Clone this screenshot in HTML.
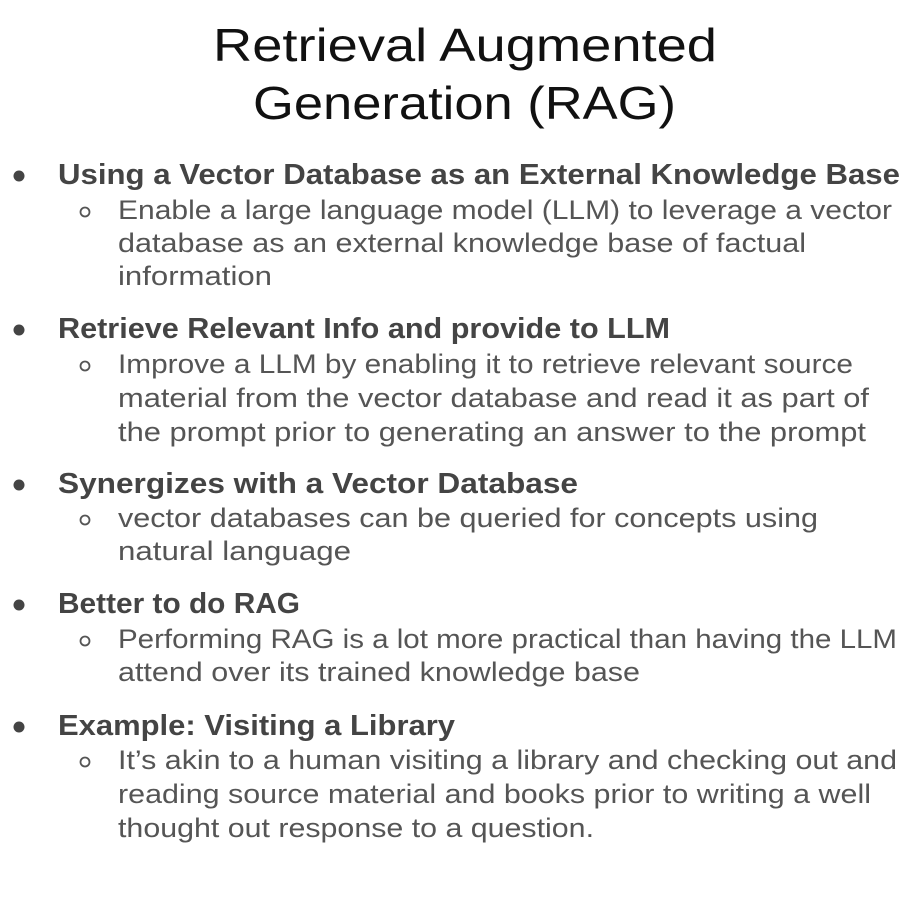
<!DOCTYPE html>
<html><head><meta charset="utf-8"><style>
html,body{margin:0;padding:0;background:#fff;}
svg{display:block;}
.t{font-family:"Liberation Sans",sans-serif;font-size:46px;fill:#111;}
.h{font-family:"Liberation Sans",sans-serif;font-size:29px;font-weight:bold;fill:#444;}
.b{font-family:"Liberation Sans",sans-serif;font-size:27px;fill:#555;}
</style></head><body>
<svg width="923" height="910" viewBox="0 0 923 910" xmlns="http://www.w3.org/2000/svg">
<text class="t" x="213" y="61" textLength="504" lengthAdjust="spacingAndGlyphs">Retrieval Augmented</text>
<text class="t" x="253" y="119" textLength="423" lengthAdjust="spacingAndGlyphs">Generation (RAG)</text>

<g fill="#444">
<circle cx="19" cy="176" r="5.5"/><circle cx="19" cy="330" r="5.5"/><circle cx="19" cy="485" r="5.5"/><circle cx="19" cy="605" r="5.5"/><circle cx="19" cy="727" r="5.5"/>
</g>
<g fill="none" stroke="#555" stroke-width="1.8">
<circle cx="85" cy="212" r="4.5"/><circle cx="85" cy="366" r="4.5"/><circle cx="85" cy="520" r="4.5"/><circle cx="85" cy="641" r="4.5"/><circle cx="85" cy="762" r="4.5"/>
</g>

<text class="h" x="58" y="184" textLength="842" lengthAdjust="spacingAndGlyphs">Using a Vector Database as an External Knowledge Base</text>
<text class="b" x="118" y="219" textLength="774" lengthAdjust="spacingAndGlyphs">Enable a large language model (LLM) to leverage a vector</text>
<text class="b" x="118" y="252" textLength="688" lengthAdjust="spacingAndGlyphs">database as an external knowledge base of factual</text>
<text class="b" x="118" y="285" textLength="154" lengthAdjust="spacingAndGlyphs">information</text>

<text class="h" x="58" y="338" textLength="612" lengthAdjust="spacingAndGlyphs">Retrieve Relevant Info and provide to LLM</text>
<text class="b" x="118" y="373" textLength="735" lengthAdjust="spacingAndGlyphs">Improve a LLM by enabling it to retrieve relevant source</text>
<text class="b" x="118" y="407" textLength="751" lengthAdjust="spacingAndGlyphs">material from the vector database and read it as part of</text>
<text class="b" x="118" y="441" textLength="748" lengthAdjust="spacingAndGlyphs">the prompt prior to generating an answer to the prompt</text>

<text class="h" x="58" y="493" textLength="520" lengthAdjust="spacingAndGlyphs">Synergizes with a Vector Database</text>
<text class="b" x="118" y="527" textLength="700" lengthAdjust="spacingAndGlyphs">vector databases can be queried for concepts using</text>
<text class="b" x="118" y="560" textLength="233" lengthAdjust="spacingAndGlyphs">natural language</text>

<text class="h" x="58" y="613" textLength="242" lengthAdjust="spacingAndGlyphs">Better to do RAG</text>
<text class="b" x="118" y="648" textLength="779" lengthAdjust="spacingAndGlyphs">Performing RAG is a lot more practical than having the LLM</text>
<text class="b" x="118" y="681" textLength="522" lengthAdjust="spacingAndGlyphs">attend over its trained knowledge base</text>

<text class="h" x="58" y="735" textLength="397" lengthAdjust="spacingAndGlyphs">Example: Visiting a Library</text>
<text class="b" x="118" y="769" textLength="779" lengthAdjust="spacingAndGlyphs">It’s akin to a human visiting a library and checking out and</text>
<text class="b" x="118" y="803" textLength="753" lengthAdjust="spacingAndGlyphs">reading source material and books prior to writing a well</text>
<text class="b" x="118" y="837" textLength="476" lengthAdjust="spacingAndGlyphs">thought out response to a question.</text>
</svg>
</body></html>
